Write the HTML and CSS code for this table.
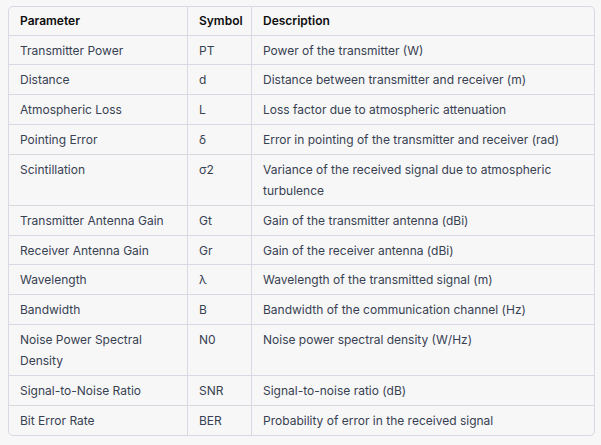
FILE: index.html
```html
<!DOCTYPE html>
<html>
<head>
<meta charset="utf-8">
<link rel="stylesheet" href="styles.css">
</head>
<body>
<div class="wrap">
<table class="params">
  <colgroup><col class="c1"><col class="c2"><col class="c3"></colgroup>
  <thead>
    <tr><th>Parameter</th><th>Symbol</th><th>Description</th></tr>
  </thead>
  <tbody>
    <tr><td>Transmitter Power</td><td>PT</td><td>Power of the transmitter (W)</td></tr>
    <tr><td>Distance</td><td>d</td><td>Distance between transmitter and receiver (m)</td></tr>
    <tr><td>Atmospheric Loss</td><td>L</td><td>Loss factor due to atmospheric attenuation</td></tr>
    <tr><td>Pointing Error</td><td>δ</td><td>Error in pointing of the transmitter and receiver (rad)</td></tr>
    <tr><td>Scintillation</td><td>σ2</td><td>Variance of the received signal due to atmospheric turbulence</td></tr>
    <tr><td>Transmitter Antenna Gain</td><td>Gt</td><td>Gain of the transmitter antenna (dBi)</td></tr>
    <tr><td>Receiver Antenna Gain</td><td>Gr</td><td>Gain of the receiver antenna (dBi)</td></tr>
    <tr><td>Wavelength</td><td>λ</td><td>Wavelength of the transmitted signal (m)</td></tr>
    <tr><td>Bandwidth</td><td>B</td><td>Bandwidth of the communication channel (Hz)</td></tr>
    <tr><td>Noise Power Spectral Density</td><td>N0</td><td>Noise power spectral density (W/Hz)</td></tr>
    <tr><td>Signal-to-Noise Ratio</td><td>SNR</td><td>Signal-to-noise ratio (dB)</td></tr>
    <tr><td>Bit Error Rate</td><td>BER</td><td>Probability of error in the received signal</td></tr>
  </tbody>
</table>
</div>
</body>
</html>
```
FILE: styles.css
```css
html, body {
  margin: 0;
  background: #f7f7f8;
}
.wrap {
  padding: 6px 6px 0 8px;
}
.params {
  width: 587px;
  table-layout: fixed;
  border-collapse: separate;
  border-spacing: 0;
  border: 1px solid #d9d9e3;
  border-radius: 5px;
  font-family: Inter, "Noto Sans", sans-serif;
  font-size: 12px;
  line-height: 21.7px;
  color: #374151;
}
.c1 { width: 178px; }
.c2 { width: 64px; }
.params th, .params td {
  text-align: left;
  vertical-align: top;
  padding: 3px 11px 4px 11px;
  border-left: 1px solid #d9d9e3;
  border-bottom: 1px solid #d9d9e3;
}
.params th:first-child, .params td:first-child {
  border-left: none;
}
.params tbody tr:last-child td {
  border-bottom: none;
}
.params th {
  font-weight: 600;
  color: #0d0d0d;
  padding-top: 3px;
  padding-bottom: 3px;
}
.params td {
  padding-top: 4px;
  padding-bottom: 3px;
}
```
